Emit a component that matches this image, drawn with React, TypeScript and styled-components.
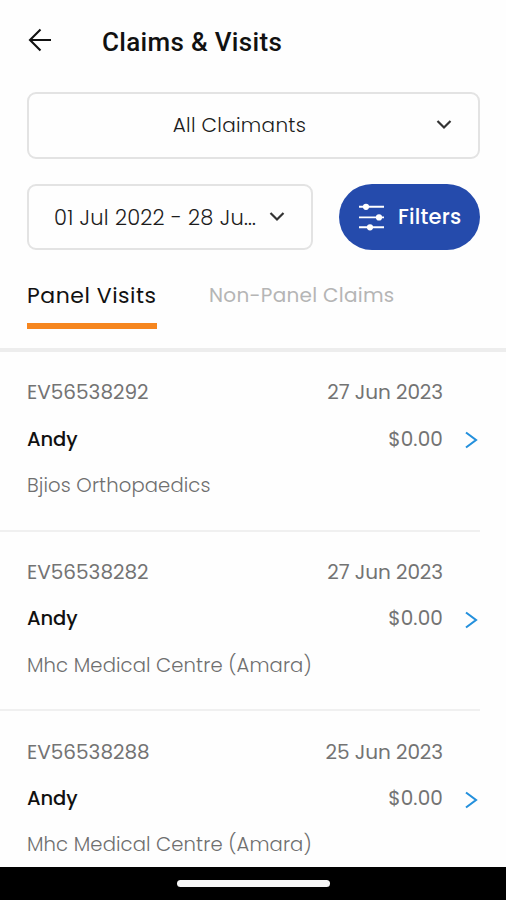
import React from 'react';
import styled, { createGlobalStyle } from 'styled-components';

const GlobalStyle = createGlobalStyle`
  * { box-sizing: border-box; }
  body { margin: 0; background: #fefefe; }
  button { background: none; border: 0; padding: 0; font: inherit; color: inherit; }
`;

const Screen = styled.div`
  width: 506px;
  height: 900px;
  display: flex;
  flex-direction: column;
  overflow: hidden;
  background: #fefefe;
  color: #1c1c1c;
  font-family: Poppins, Inter, sans-serif;
  font-feature-settings: 'cv11' 1;
  font-size: 20px;
  white-space: nowrap;
`;

const Header = styled.header`
  flex: none;
  height: 92px;
  padding: 28px 28px 0;
  display: flex;
  align-items: flex-start;
  gap: 50px;
`;

const BackButton = styled.button`
  display: flex;
  width: 24px;
  height: 24px;
`;

const Title = styled.h1`
  margin: 0;
  font: 500 26px/28px Roboto, sans-serif;
  letter-spacing: 0.32px;
  color: #111;
`;

const Controls = styled.section`
  flex: none;
  padding: 0 26px 0 27px;
  display: grid;
  grid-template-columns: 286px 141px;
  justify-content: space-between;
  row-gap: 25px;
`;

const Select = styled.button<{ $wide?: boolean }>`
  grid-column: ${(p) => (p.$wide ? '1 / -1' : 'auto')};
  height: ${(p) => (p.$wide ? 67 : 66)}px;
  padding: ${(p) => (p.$wide ? '0 26px 2px 14px' : '0 26px 0 25px')};
  border: 2px solid #e3e3e3;
  border-radius: 9px;
  display: flex;
  align-items: center;
  justify-content: space-between;
`;

const SelectText = styled.span<{ $center?: boolean; $size: number; $spacing: number }>`
  flex: 1;
  text-align: ${(p) => (p.$center ? 'center' : 'left')};
  font-size: ${(p) => p.$size}px;
  letter-spacing: ${(p) => p.$spacing}px;
  font-weight: 300;
`;

const FilterButton = styled.button`
  height: 66px;
  border-radius: 33px;
  background: #254bac;
  color: #fff;
  font-size: 21px;
  font-weight: 500;
  letter-spacing: 0.2px;
  display: flex;
  align-items: center;
  padding-left: 20px;
  gap: 14px;
`;

const FilterLabel = styled.span`
  padding-bottom: 2px;
`;

const Tabs = styled.nav`
  flex: none;
  height: 102px;
  padding: 27px 27px 0;
  border-bottom: 4px solid #ededed;
  display: flex;
  align-items: flex-start;
  gap: 52px;
`;

const Tab = styled.button<{ $active?: boolean; $width: number; $spacing: number }>`
  width: ${(p) => p.$width}px;
  height: 52px;
  border-bottom: 6px solid ${(p) => (p.$active ? '#f6861f' : 'transparent')};
  color: ${(p) => (p.$active ? '#111' : '#b5b5b5')};
  font-size: ${(p) => (p.$active ? 22 : 20)}px;
  line-height: ${(p) => (p.$active ? 37 : 36)}px;
  letter-spacing: ${(p) => p.$spacing}px;
  text-align: left;
  display: flex;
`;

const List = styled.main`
  flex: 1;
  min-height: 0;
  overflow: hidden;
`;

const Visit = styled.article`
  width: 480px;
  height: 179.7px;
  padding: 17px 0 0 27px;
  border-bottom: 2px solid #f0f0f0;
  display: grid;
  grid-template-columns: 1fr auto 37px;
  grid-template-rows: 46.5px 46.5px 46px;
  align-items: center;
`;

const Meta = styled.span<{ $spacing: number }>`
  color: #737373;
  letter-spacing: ${(p) => p.$spacing}px;
`;

const Amount = styled(Meta)`
  text-align: right;
`;

const DateText = styled(Meta)`
  grid-column: 2 / 3;
`;

const Name = styled.span`
  padding-top: 1px;
  color: #111;
  font-size: 19.5px;
  font-weight: 500;
  letter-spacing: -0.1px;
`;

const Clinic = styled.span`
  grid-column: 1 / -1;
  color: #6f6f6f;
  font-size: 19.6px;
  font-weight: 300;
  letter-spacing: 0.11px;
`;

const OpenButton = styled.button`
  display: flex;
  justify-content: flex-end;
  padding: 3px 2px 0 0;
`;

const RowEnd = styled.span``;

const SystemBar = styled.footer`
  flex: none;
  height: 33px;
  background: #000;
  display: flex;
  align-items: center;
  justify-content: center;
`;

const HomeHandle = styled.span`
  width: 153px;
  height: 7px;
  border-radius: 4px;
  background: #f7f7f7;
`;

const BackArrow = () => (
  <svg width="24" height="24" viewBox="0 0 24 24" fill="none" stroke="#111" strokeWidth="2.1">
    <path d="M23 12H2M12.5 1.5 2 12l10.5 10.5" />
  </svg>
);

const ChevronDown = () => (
  <svg width="16" height="12" viewBox="0 0 16 12" fill="none" stroke="#333" strokeWidth="2.2">
    <path d="M1.5 2 8 8.5 14.5 2" />
  </svg>
);

const ChevronRight = () => (
  <svg width="13" height="18" viewBox="0 0 13 18" fill="none" stroke="#2490dc" strokeWidth="2.1">
    <path d="M1 1.5 11 9 1 16.5" />
  </svg>
);

const Sliders = () => (
  <svg width="25" height="28" viewBox="0 0 25 28" fill="#fff" stroke="#fff" strokeWidth="1.9">
    <path d="M0 3.8h25M0 14.4h25M0 24.3h25" />
    <g stroke="none">
      <circle cx="7" cy="3.8" r="3.1" />
      <circle cx="20" cy="14.4" r="3.1" />
      <circle cx="11" cy="24.3" r="3.1" />
    </g>
  </svg>
);

const visits = [
  { id: 'EV56538292', date: '27 Jun 2023', clinic: 'Bjios Orthopaedics' },
  { id: 'EV56538282', date: '27 Jun 2023', clinic: 'Mhc Medical Centre (Amara)' },
  { id: 'EV56538288', date: '25 Jun 2023', clinic: 'Mhc Medical Centre (Amara)' },
];

export default function App() {
  return (
    <Screen>
      <GlobalStyle />
      <Header>
        <BackButton aria-label="Back"><BackArrow /></BackButton>
        <Title>Claims &amp; Visits</Title>
      </Header>
      <Controls>
        <Select $wide>
          <SelectText $center $size={20} $spacing={0.3}>All Claimants</SelectText>
          <ChevronDown />
        </Select>
        <Select>
          <SelectText $size={21} $spacing={0.25}>01 Jul 2022 - 28 Ju...</SelectText>
          <ChevronDown />
        </Select>
        <FilterButton>
          <Sliders />
          <FilterLabel>Filters</FilterLabel>
        </FilterButton>
      </Controls>
      <Tabs>
        <Tab $active $width={130} $spacing={0.52}>Panel Visits</Tab>
        <Tab $width={190} $spacing={0.28}>Non-Panel Claims</Tab>
      </Tabs>
      <List>
        {visits.map((v) => (
          <Visit key={v.id}>
            <Meta $spacing={0}>{v.id}</Meta>
            <DateText $spacing={-0.08}>{v.date}</DateText>
            <RowEnd />
            <Name>Andy</Name>
            <Amount $spacing={0.1}>$0.00</Amount>
            <OpenButton aria-label="Open visit"><ChevronRight /></OpenButton>
            <Clinic>{v.clinic}</Clinic>
          </Visit>
        ))}
      </List>
      <SystemBar><HomeHandle /></SystemBar>
    </Screen>
  );
}
